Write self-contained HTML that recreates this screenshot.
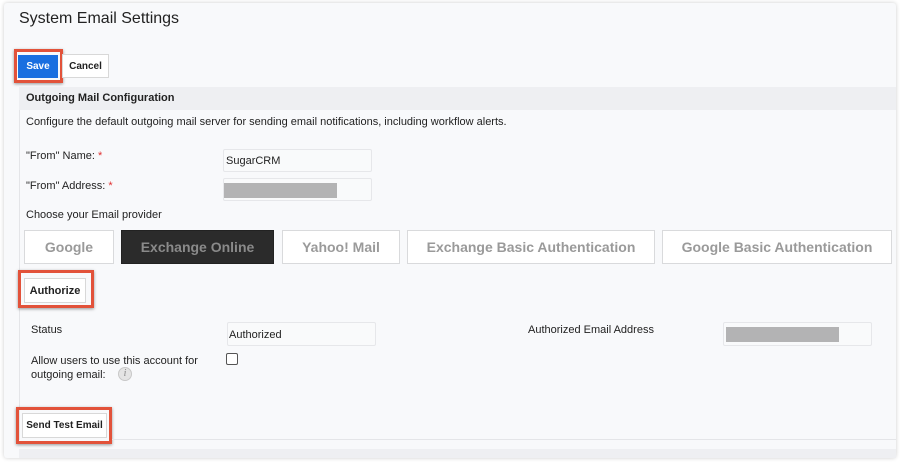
<!DOCTYPE html>
<html><head><style>
*{margin:0;padding:0;box-sizing:border-box}
body{width:900px;height:462px;background:#fff;font-family:"Liberation Sans",Arial,sans-serif;position:relative;overflow:hidden;color:#222}
.a{position:absolute}
.card{left:4px;top:3px;width:892px;height:455px;background:#f8f9fb;box-shadow:0 0 4px rgba(0,0,0,.2);border-radius:3px}
.t{font-size:11px;white-space:nowrap}
.inp{background:#f9fafb;border:1px solid #e6e7ea;border-radius:2px}
.gb{background:#b3b3b4}
.red{border:3px solid #e2523a;box-shadow:0 1px 3px rgba(0,0,0,.4)}
.btn{background:#fff;border:1px solid #d8d8d8;font-weight:bold;font-size:10px;display:flex;align-items:center;justify-content:center;color:#222}
.tile{top:230px;height:34px;background:#fff;border:1px solid #d9dadc;font-weight:bold;font-size:14px;color:#9a9a9a;display:flex;align-items:center;justify-content:center}
.req{color:#e03030}
</style></head><body>
<div class="a card"></div>
<div class="a" style="left:19px;top:10px;font-size:16px;color:#222">System Email Settings</div>
<div class="a red" style="left:14px;top:49px;width:49px;height:34px"></div>
<div class="a" style="left:18px;top:55px;width:40px;height:23px;background:#1a6fe0;color:#fff;font-weight:bold;font-size:10px;display:flex;align-items:center;justify-content:center">Save</div>
<div class="a btn" style="left:62px;top:54px;width:47px;height:24px">Cancel</div>
<div class="a" style="left:19px;top:87px;width:877px;height:23px;background:#eeeff2"></div>
<div class="a" style="left:19px;top:110px;width:1px;height:330px;background:#e4e5e8"></div>
<div class="a t" style="left:26px;top:92px;font-weight:bold">Outgoing Mail Configuration</div>
<div class="a t" style="left:26px;top:116px">Configure the default outgoing mail server for sending email notifications, including workflow alerts.</div>
<div class="a t" style="left:26px;top:150px">"From" Name: <span class="req">*</span></div>
<div class="a inp" style="left:223px;top:149px;width:149px;height:23px"></div>
<div class="a t" style="left:226px;top:155px">SugarCRM</div>
<div class="a t" style="left:26px;top:180px">"From" Address: <span class="req">*</span></div>
<div class="a inp" style="left:223px;top:178px;width:149px;height:23px"></div>
<div class="a gb" style="left:224px;top:183px;width:113px;height:15px"></div>
<div class="a t" style="left:26px;top:209px">Choose your Email provider</div>
<div class="a tile" style="left:24px;width:90px">Google</div>
<div class="a tile" style="left:121px;width:153px;background:#2b2b2b;border-color:#222;color:#8a8a8a">Exchange Online</div>
<div class="a tile" style="left:282px;width:118px">Yahoo! Mail</div>
<div class="a tile" style="left:407px;width:248px">Exchange Basic Authentication</div>
<div class="a tile" style="left:662px;width:230px">Google Basic Authentication</div>
<div class="a red" style="left:18px;top:270px;width:76px;height:38px"></div>
<div class="a btn" style="left:24px;top:278px;width:62px;height:25px;font-size:11px">Authorize</div>
<div class="a t" style="left:31px;top:324px">Status</div>
<div class="a inp" style="left:227px;top:322px;width:149px;height:24px"></div>
<div class="a t" style="left:229px;top:329px">Authorized</div>
<div class="a t" style="left:528px;top:324px">Authorized Email Address</div>
<div class="a inp" style="left:723px;top:322px;width:149px;height:24px"></div>
<div class="a gb" style="left:726px;top:327px;width:113px;height:15px"></div>
<div class="a t" style="left:31px;top:354px;line-height:14px">Allow users to use this account for<br>outgoing email:</div>
<div class="a" style="left:118px;top:367px;width:14px;height:14px;border-radius:50%;background:#e4e4e4;border:1px solid #c8c8c8;font:italic 10px 'Liberation Serif',serif;color:#888;text-align:center;line-height:12px">i</div>
<div class="a" style="left:226px;top:353px;width:12px;height:12px;border:1px solid #555;border-radius:2px;background:#fff"></div>
<div class="a red" style="left:16px;top:407px;width:96px;height:37px"></div>
<div class="a btn" style="left:22px;top:413px;width:85px;height:25px">Send Test Email</div>
<div class="a" style="left:112px;top:439px;width:784px;height:1px;background:#e4e5e8"></div>
<div class="a" style="left:19px;top:449px;width:877px;height:9px;background:#eeeff2"></div>
</body></html>
